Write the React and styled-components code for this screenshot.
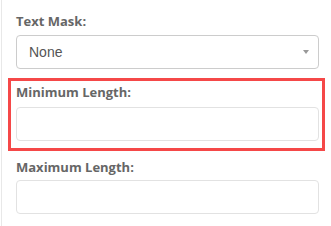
import styled, { createGlobalStyle } from "styled-components";

const GlobalStyle = createGlobalStyle`
  html, body {
    margin: 0;
    padding: 0;
    background: #ffffff;
  }
  * {
    box-sizing: border-box;
  }
`;

const App = () => {
  return (
    <>
      <GlobalStyle />
      <Panel>
        <FieldGroup>
          <FieldLabel>Text Mask:</FieldLabel>
          <SelectBox>
            <SelectValue>None</SelectValue>
            <SelectArrow />
          </SelectBox>
        </FieldGroup>
        <HighlightGroup>
          <FieldLabel gap={5}>Minimum Length:</FieldLabel>
          <TextInput />
        </HighlightGroup>
        <FieldGroup>
          <FieldLabel gap={3}>Maximum Length:</FieldLabel>
          <TextInput />
        </FieldGroup>
      </Panel>
    </>
  );
};

const Panel = styled.div`
  margin-left: 1px;
  width: 330px;
  height: 226px;
  border-left: 1px solid #e8e8e8;
  padding: 11px 12px 0 14px;
  display: flex;
  flex-direction: column;
`;

const FieldGroup = styled.div`
  display: flex;
  flex-direction: column;
`;

const HighlightGroup = styled.div`
  display: flex;
  flex-direction: column;
  margin: 9px -6px 6px -8px;
  padding: 1px 3px 7px 5px;
  border: 3px solid #f54848;
`;

const FieldLabel = styled.label`
  font-family: "Open Sans", "Liberation Sans", sans-serif;
  font-size: 13px;
  font-weight: 700;
  line-height: 20px;
  color: #666666;
  margin-bottom: ${(p) => (p.gap !== undefined ? p.gap : 4)}px;
`;

const SelectBox = styled.div`
  height: 34px;
  border: 1px solid #cccccc;
  border-radius: 4px;
  display: flex;
  align-items: center;
  justify-content: space-between;
  padding: 0 9px 0 12px;
  background: #ffffff;
`;

const SelectValue = styled.span`
  font-family: "Liberation Sans", Arial, sans-serif;
  font-size: 14px;
  color: #555555;
`;

const SelectArrow = styled.span`
  width: 0;
  height: 0;
  border-left: 3px solid transparent;
  border-right: 3px solid transparent;
  border-top: 4px solid #999999;
`;

const TextInput = styled.input`
  height: 34px;
  width: 100%;
  border: 1px solid #e2e2e2;
  border-radius: 4px;
  background: #ffffff;
  outline: none;
  padding: 0 12px;
`;

export default App;
